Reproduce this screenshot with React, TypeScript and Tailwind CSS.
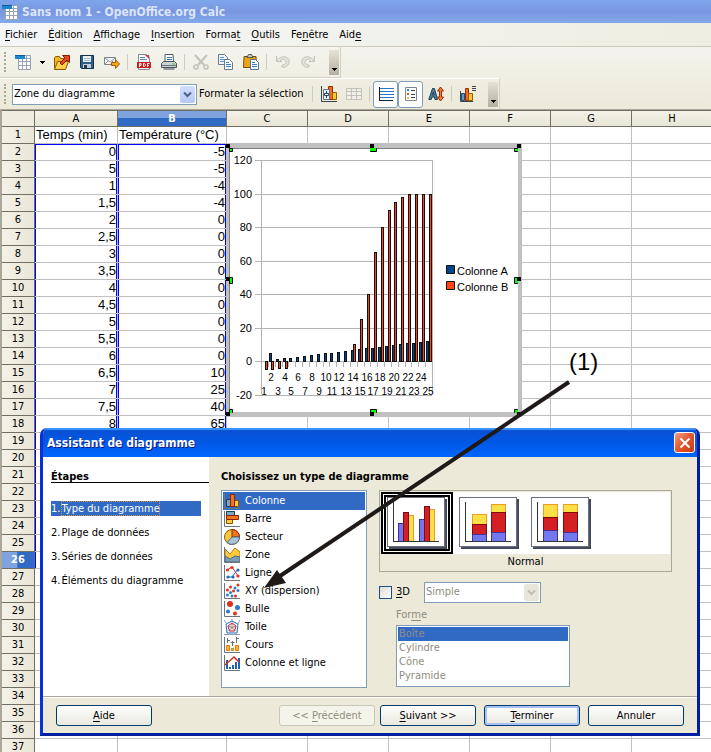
import { useState, type ReactNode } from "react";
import clsx from "clsx";

const COLUMNS = ["A", "B", "C", "D", "E", "F", "G", "H"];
const ROW_COUNT = 37;

const CELLS: Record<number, [string, string]> = {
  1: ["Temps (min)", "Température (°C)"],
  2: ["0", "-5"],
  3: ["5", "-5"],
  4: ["1", "-4"],
  5: ["1,5", "-4"],
  6: ["2", "0"],
  7: ["2,5", "0"],
  8: ["3", "0"],
  9: ["3,5", "0"],
  10: ["4", "0"],
  11: ["4,5", "0"],
  12: ["5", "0"],
  13: ["5,5", "0"],
  14: ["6", "0"],
  15: ["6,5", "10"],
  16: ["7", "25"],
  17: ["7,5", "40"],
  18: ["8", "65"],
};

const SERIES_A = [0, 5, 1, 1.5, 2, 2.5, 3, 3.5, 4, 4.5, 5, 5.5, 6, 6.5, 7, 7.5, 8, 8.5, 9, 9.5, 10, 10.5, 11, 11.5, 12];
const SERIES_B = [-5, -5, -4, -4, 0, 0, 0, 0, 0, 0, 0, 0, 0, 10, 25, 40, 65, 80, 90, 95, 98, 100, 100, 100, 100];

// [before, mnemonic letter, after]
const MENUS = [
  ["", "F", "ichier"],
  ["", "É", "dition"],
  ["", "A", "ffichage"],
  ["", "I", "nsertion"],
  ["Forma", "t", ""],
  ["", "O", "utils"],
  ["Fe", "n", "être"],
  ["Aid", "e", ""],
];

const STEPS = ["Type du diagramme", "Plage de données", "Séries de données", "Éléments du diagramme"];

function Icon({ children, size = 16 }: { children: ReactNode; size?: number }) {
  return (
    <svg width={size} height={size} viewBox="0 0 16 16" fill="none" className="shrink-0" aria-hidden="true">
      {children}
    </svg>
  );
}

/* ---------- toolbar icons ---------- */

function SheetIcon() {
  return (
    <Icon>
      <path d="M3 2h13v14H3z" fill="#fff" />
      <path d="M3.5 4v11.5h12V1.5H10M7.5 4v12M11.500 1v15M3 7.5h13M3 11.5h13M10 4.5h6" stroke="#9aa3b0" />
      <path d="M0 2h10v3H0z" fill="#1c86d0" />
      <path d="M0 1.5h10" stroke="#0c5c9c" />
    </Icon>
  );
}

function OpenIcon() {
  return (
    <Icon>
      <path d="M.5 14.500V3.500l1-1h4l1 2h6v3" fill="#f3b61c" stroke="#8d5a00" />
      <path d="M.5 15.500l3-8h11l-3 8z" fill="#fcd04a" stroke="#8d5a00" />
      <path d="M6 9l5-5-2.500-2.500h7v7L13 6 8 11z" fill="#e8471a" stroke="#8c1d00" />
    </Icon>
  );
}

function SaveIcon() {
  return (
    <Icon>
      <path d="M1.500 1.500h13v13h-12l-1-1z" fill="#2f5f86" stroke="#12324d" />
      <path d="M4 2h8v6H4z" fill="#e8f0f5" />
      <path d="M5 4.500h6M5 6.500h6" stroke="#a6bccb" />
      <path d="M4 10h8v4H4z" fill="#c5ccd2" />
      <path d="M5 11h3v3H5z" fill="#1c3c57" />
    </Icon>
  );
}

function MailIcon() {
  return (
    <Icon>
      <path d="M.5 3.500h11v7H.5z" fill="#f4f5f7" stroke="#7a828c" />
      <path d="M1 4l5 4 5-4M1 10l3-3M11 10L8 7" stroke="#8b939c" />
      <path d="M7.500 8.500h4v-3l4 4.500-4 4.500v-3h-4z" fill="#f7a71c" stroke="#a35a00" />
    </Icon>
  );
}

function PdfIcon() {
  return (
    <Icon>
      <path d="M2.500.5h8l3 3v12h-11z" fill="#fafbfc" stroke="#7e8a96" />
      <path d="M4 3.500h5M4 5.500h7" stroke="#5f86a8" />
      <path d="M9 1h4v4z" fill="#d8353a" />
      <path d="M1 8h14v6H1z" fill="#cf1b20" />
      <path d="M3.500 13V9.500h1.500v2H3.500M7.500 9.500v3h1l.8-1v-1l-.8-1zM11.500 13V9.500H13.500M11.500 11.500h1.500" stroke="#fff" />
    </Icon>
  );
}

function PrintIcon() {
  return (
    <Icon>
      <path d="M4 8V.5h8l.5 7.500" fill="#fff" stroke="#4d5a66" />
      <path d="M6 3.500h5M6 5.500h5" stroke="#3e7cb4" />
      <path d="M.5 9.500l2-2h11l2 2v4H.5z" fill="#cdd2d5" stroke="#47525b" />
      <path d="M1 11.500h14" stroke="#69747c" />
      <path d="M2.500 15h11" stroke="#39434b" />
      <path d="M11 10h3" stroke="#5bbf3a" />
    </Icon>
  );
}

function CutIcon() {
  return (
    <Icon>
      <path d="M2 1l9 10M14 1L5 11" stroke="#c2c1ba" strokeWidth="2" />
      <circle cx="3" cy="13" r="2" stroke="#c2c1ba" strokeWidth="1.500" />
      <circle cx="13" cy="13" r="2" stroke="#c2c1ba" strokeWidth="1.500" />
    </Icon>
  );
}

function CopyIcon() {
  return (
    <Icon>
      <path d="M.5.5h6l3 3v7h-9z" fill="#eef4f9" stroke="#6b7b89" />
      <path d="M2 3.500h4M2 5.500h6M2 7.500h6" stroke="#5d95c2" />
      <path d="M6.500 5.500h5l3 3v7h-8z" fill="#f7fafc" stroke="#6b7b89" />
      <path d="M8 8.500h3M8 10.500h5M8 12.500h5" stroke="#3d82bb" />
    </Icon>
  );
}

function PasteIcon() {
  return (
    <Icon>
      <path d="M1 2.500h12l.5 11h-13z" fill="#e9a41b" stroke="#7c4d00" />
      <path d="M4 3.500l1.500-3h3l1.500 3z" fill="#c3c8cc" stroke="#4f565c" />
      <path d="M7.500 5.500h5l3 3v7h-8z" fill="#f4f9fd" stroke="#5a7389" />
      <path d="M9 8.500h3M9 10.500h5M9 12.500h5" stroke="#3d82bb" />
    </Icon>
  );
}

function UndoIcon() {
  return (
    <Icon>
      <path d="M1.500 2v5.500H7M2 7l3-3c6-4 12 2 8 7-2 2-4 3-6 2v-2c4 0 5-3 3-5-2-1.500-3-1-5 1" stroke="#c4c3bb" fill="#e4e2d9" />
    </Icon>
  );
}

function RedoIcon() {
  return (
    <Icon>
      <path d="M14.500 2v5.500H9M14 7l-3-3C5 0-1 6 3 11c2 2 4 3 6 2v-2c-4 0-5-3-3-5 2-1.500 3-1 5 1" stroke="#c4c3bb" fill="#e4e2d9" />
    </Icon>
  );
}

function ChartAreaIcon() {
  return (
    <Icon>
      <path d="M.5 0v15.500H16" stroke="#38424c" />
      <path d="M7.500.5h4v13h-4z" fill="#f2691c" stroke="#9c2a00" />
      <path d="M11.500 6.500h4v7h-4z" fill="#ffc824" stroke="#9c5c00" />
      <path d="M2.500 3.500h6v10h-6z" fill="#e9f0f5" stroke="#5f7486" />
      <path d="M5.500 5v7" stroke="#27435a" />
      <path d="M3.500 7.500h4v2h-4z" fill="#fff" stroke="#27435a" />
    </Icon>
  );
}

function TableIcon() {
  return (
    <Icon>
      <path d="M.5 2.500h15v11H.5zM5.500 2v12M10.500 2v12M0 5.500h16M0 9.500h16" stroke="#c3c2b9" fill="#f1f0e8" />
    </Icon>
  );
}

function GridLinesIcon() {
  return (
    <Icon>
      <path d="M2 2.500h14M2 5.500h14M2 8.500h14M2 11.500h14" stroke="#2c74c9" />
      <path d="M1.500 1v14M1 14.500h14" stroke="#16202c" />
    </Icon>
  );
}

function LegendIcon() {
  return (
    <Icon>
      <path d="M2.500 1.500h11v13h-11z" fill="#fdfdfd" stroke="#7e8790" />
      <path d="M8 4.500h4M8 8.500h4M8 11.500h4" stroke="#3c4650" />
      <path d="M4 3h2v2H4z" fill="#3382c8" />
      <path d="M4 7h2v2H4z" fill="#e85a1a" />
      <path d="M4 11h2v2H4z" fill="#f5b81c" />
    </Icon>
  );
}

function ScaleTextIcon() {
  return (
    <Icon>
      <path d="M.8 13.500L4.500 2.500h2l3 11H7l-.6-2.500H4l-.8 2.500zM4.600 9h1.400l-.6-3z" fill="#4e7c9c" stroke="#1c3f59" />
      <path d="M12.500 1l3 4h-2v6h2l-3 4-3-4h2V5h-2z" fill="#f3793a" stroke="#a32c00" />
    </Icon>
  );
}

function AutoLayoutIcon() {
  return (
    <Icon>
      <path d="M.5 5v10.500H13" stroke="#38424c" />
      <path d="M1.500 7.500h3v7h-3z" fill="#5f9cc9" stroke="#1f4d70" />
      <path d="M5.500 2.500h3v12h-3z" fill="#f2691c" stroke="#9c2a00" />
      <path d="M8.500 7.500h4v7h-4z" fill="#ffc824" stroke="#9c5c00" />
      <path d="M12 .5h4M12 2.500h4M12 4.500h4" stroke="#444" />
    </Icon>
  );
}

/* ---------- chart type icons ---------- */

const AXES = <path d="M.5 0v15.500H16" stroke="#6d747c" />;

const CHART_TYPES: { label: string; icon: ReactNode }[] = [
  {
    label: "Colonne",
    icon: (
      <>
        {AXES}
        <path d="M2.500 6.500h4v7h-4z" fill="#7aa6c4" stroke="#1d3f5c" />
        <path d="M10.500 7.500h4v6h-4z" fill="#ffcd34" stroke="#8f5200" />
        <path d="M6.500 1.500h4v12h-4z" fill="#f27422" stroke="#8c2400" />
      </>
    ),
  },
  {
    label: "Barre",
    icon: (
      <>
        {AXES}
        <path d="M2.500.5h8v4h-8z" fill="#7aa6c4" stroke="#1d3f5c" />
        <path d="M2.500 8.500h6v4h-6z" fill="#ffcd34" stroke="#8f5200" />
        <path d="M2.500 4.500h12v4h-12z" fill="#f27422" stroke="#8c2400" />
      </>
    ),
  },
  {
    label: "Secteur",
    icon: (
      <>
        <circle cx="8" cy="8" r="7.500" fill="#f9c63c" stroke="#8f5a10" />
        <path d="M8 8V.5A7.500 7.500 0 0 1 15.500 8z" fill="#f27422" stroke="#8c2400" />
        <path d="M8 8h7.500A7.500 7.500 0 0 1 3 13.500z" fill="#a9c3d6" stroke="#4d6d86" />
      </>
    ),
  },
  {
    label: "Zone",
    icon: (
      <>
        <path d="M1 2l5 5 5-6 5 4v10H1z" fill="#ffcb3a" stroke="#b07b10" />
        <path d="M1 9l5 3 5-3 5 1v5H1z" fill="#7c9fb8" stroke="#446882" />
        {AXES}
      </>
    ),
  },
  {
    label: "Ligne",
    icon: (
      <>
        {AXES}
        <path d="M3 5l5-3 6 9" stroke="#d92c1c" />
        <path d="M3 12h5l6-8" stroke="#2b74c4" />
        <g fill="#e0301e">
          <circle cx="3.500" cy="5" r="1.600" />
          <circle cx="8" cy="2.500" r="1.600" />
          <circle cx="14" cy="11" r="1.600" />
        </g>
        <g fill="#2268be">
          <circle cx="4" cy="12" r="1.600" />
          <circle cx="9" cy="12" r="1.600" />
          <circle cx="14" cy="5" r="1.600" />
        </g>
      </>
    ),
  },
  {
    label: "XY (dispersion)",
    icon: (
      <>
        {AXES}
        <g fill="#e0301e">
          <circle cx="6.500" cy="4" r="1.500" />
          <circle cx="14" cy="2" r="1.500" />
          <circle cx="3.500" cy="7" r="1.500" />
          <circle cx="9.500" cy="8" r="1.500" />
          <circle cx="11.500" cy="13" r="1.500" />
        </g>
        <g fill="#2f7bd0">
          <circle cx="3.500" cy="12" r="1.500" />
          <circle cx="6.500" cy="9.500" r="1.500" />
          <circle cx="8" cy="13" r="1.500" />
          <circle cx="11" cy="5" r="1.500" />
          <circle cx="14" cy="7.500" r="1.500" />
        </g>
      </>
    ),
  },
  {
    label: "Bulle",
    icon: (
      <>
        {AXES}
        <circle cx="6" cy="3" r="3" fill="#e0301e" />
        <circle cx="13.500" cy="6.500" r="2.500" fill="#2f7bd0" />
        <circle cx="4" cy="10.500" r="2" fill="#2f7bd0" />
        <circle cx="11" cy="12.500" r="2" fill="#e0301e" />
      </>
    ),
  },
  {
    label: "Toile",
    icon: (
      <>
        <path d="M8 2l6 3-1 9H3L2 5z" fill="#e5f0fa" stroke="#2f6fb5" />
        <path d="M0 1l3 4M8 0v2M16 1l-2 4M0 15.500h16" stroke="#8aa2b8" />
        <path d="M8 4l4 3-1.500 5h-5L4 7z" fill="#f7d8da" stroke="#c92a32" />
        <path d="M8 5v3.500l-3 3M8 8.500l3 3M4 7l4 1.500L12 7" stroke="#777" strokeWidth=".7" />
      </>
    ),
  },
  {
    label: "Cours",
    icon: (
      <>
        {AXES}
        <path d="M3.500 1v5M3.500 3.500H6M8.500 4v5M6.500 5.500h4M12.500 0v6M12.500 1.500H15" stroke="#6a6f75" />
        <path d="M2.500 8.500h3v5h-3z" fill="#ffb52c" stroke="#e07c10" />
        <path d="M7.500 11.500h2v2h-2z" fill="#ffb52c" stroke="#e07c10" />
        <path d="M11.500 8.500h3v5h-3z" fill="#ffb52c" stroke="#e07c10" />
      </>
    ),
  },
  {
    label: "Colonne et ligne",
    icon: (
      <>
        {AXES}
        <path d="M2 5h2v9H2zM5 12h2v2H5zM8 10h2v4H8zM11 7h2v7h-2zM14 3h2v11h-2z" fill="#1f62ad" />
        <path d="M1 10l9-8 5 5" stroke="#d92c1c" strokeWidth="1.500" />
      </>
    ),
  },
];

/* ---------- sub type previews ---------- */

type Block = [x: number, y: number, w: number, h: number, color: "blue" | "red" | "yellow"];

const BLOCK_COLORS = {
  blue: { fill: "#7178f0", stroke: "#4a2c96" },
  red: { fill: "#d42024", stroke: "#7c0c10" },
  yellow: { fill: "#fde047", stroke: "#f29b22" },
};

const SUB_TYPES: { name: string; blocks: Block[] }[] = [
  {
    name: "Normal",
    blocks: [
      [11, 26, 5, 18, "blue"],
      [21, 18, 5, 26, "yellow"],
      [16, 15, 5, 29, "red"],
      [32, 22, 5, 22, "blue"],
      [42, 12, 5, 32, "yellow"],
      [37, 9, 5, 35, "red"],
    ],
  },
  {
    name: "Empilé",
    blocks: [
      [13, 17, 14, 10, "yellow"],
      [13, 27, 14, 10, "red"],
      [13, 37, 14, 7, "blue"],
      [32, 7, 14, 8, "yellow"],
      [32, 15, 14, 20, "red"],
      [32, 35, 14, 9, "blue"],
    ],
  },
  {
    name: "Pourcentage",
    blocks: [
      [12, 7, 14, 13, "yellow"],
      [12, 20, 14, 13, "red"],
      [12, 33, 14, 11, "blue"],
      [32, 7, 14, 8, "yellow"],
      [32, 15, 14, 20, "red"],
      [32, 35, 14, 9, "blue"],
    ],
  },
];

function Preview({ blocks }: { blocks: Block[] }) {
  return (
    <svg width="60" height="52" viewBox="0 0 60 52" fill="none" shapeRendering="crispEdges" aria-hidden="true">
      <path d="M2 2h58v50H2z" fill="#454a5c" />
      <path d="M.5.5h57v49H.5z" fill="#fff" stroke="#6b7080" />
      {blocks.map(([x, y, w, h, color], i) => (
        <rect key={i} x={x + 0.5} y={y + 0.5} width={w} height={h} {...BLOCK_COLORS[color]} />
      ))}
      <path d="M6.500 5v39.500H52" stroke="#2e3340" />
    </svg>
  );
}

/* ---------- embedded chart ---------- */

const PLOT = { left: 35, right: 206, top: 17, zero: 218, bottom: 251 };
const UNIT = (PLOT.zero - PLOT.top) / 120;
const STEP = (PLOT.right - PLOT.left) / SERIES_A.length;

function Bar({ x, value, fill }: { x: number; value: number; fill: string }) {
  if (value === 0) return null;
  const edge = Math.round(PLOT.zero - value * UNIT);
  return (
    <rect
      x={Math.round(x) + 0.5}
      y={Math.min(edge, PLOT.zero) + 0.5}
      width="2"
      height={Math.abs(edge - PLOT.zero)}
      fill={fill}
      stroke="#111"
    />
  );
}

function SheetChart() {
  return (
    <svg width="296" height="274" viewBox="0 0 296 274" fill="none" className="block font-['Liberation_Sans',sans-serif] text-[11px]" role="img">
      <path d="M0 1h296v273H0z" fill="#c0c0c0" />
      <path d="M3 5h289v264H3z" fill="#808080" />
      <path d="M4 6h288v263H4z" fill="#fff" />

      {[120, 100, 80, 60, 40, 20, 0, -20].map((v) => {
        const y = Math.round(PLOT.zero - v * UNIT);
        return (
          <g key={v}>
            <path d={`M29 ${y + 0.5}H206`} stroke="#b3b3b3" />
            <text x="26" y={y + 4} textAnchor="end" fill="#000">{v}</text>
          </g>
        );
      })}
      <path d="M35.500 17v234M206.500 17v234" stroke="#b3b3b3" />

      {SERIES_A.map((a, i) => {
        const x = PLOT.left + i * STEP;
        return (
          <g key={i}>
            <path d={`M${Math.round(x) + 0.5} 218v6`} stroke="#b3b3b3" />
            <Bar x={x + 1} value={a} fill="#004586" />
            <Bar x={x + 3.5} value={SERIES_B[i]} fill="#ff420e" />
            <text x={Math.round(x) + 3} y={i % 2 ? 238 : 252} textAnchor="middle" fill="#000" className="text-[10px]">{i + 1}</text>
          </g>
        );
      })}

      <path d="M220.500 122.500h8v8h-8z" fill="#004586" stroke="#111" />
      <text x="231" y="132" fill="#000">Colonne A</text>
      <path d="M220.500 138.500h8v8h-8z" fill="#ff420e" stroke="#111" />
      <text x="231" y="148" fill="#000">Colonne B</text>

      {/* selection handles: green for the chart area, black for the frame */}
      <g fill="#00ff00" stroke="#000">
        <path d="M3.500 5.500h3v3h-3zM144.500 5.500h6v3h-6zM288.500 5.500h3v3h-3z" />
        <path d="M3.500 134.500h3v6h-3zM288.500 134.500h3v6h-3z" />
        <path d="M3.500 266.500h3v3h-3zM144.500 266.500h6v3h-6zM288.500 266.500h3v3h-3z" />
      </g>
      <path d="M4 6h2v2H4zM144 5h6v3h-6zM289 6h3v2h-3zM4 135h2v5H4zM289 135h3v5h-3zM4 267h2v3H4zM145 267h5v3h-5zM289 267h3v3h-3z" fill="#00ff00" />
      <path
        d="M0 1h4v4H0zM144 1h4v4h-4zM291 1h4v4h-4zM0 134h4v4H0zM291 134h4v4h-4zM0 269h4v4H0zM144 269h4v4h-4zM291 269h4v4h-4z"
        fill="#000"
      />
    </svg>
  );
}

/* ---------- toolbar parts ---------- */

function ToolButton({ label, children }: { label: string; children: ReactNode }) {
  return (
    <button aria-label={label} className="flex size-[25px] shrink-0 items-center justify-center">
      {children}
    </button>
  );
}

function Separator() {
  return <span className="mx-[3px] h-4 w-px shrink-0 bg-[#cfcbbd]" />;
}

function Grip() {
  return <span className="ml-1 h-5 w-0 shrink-0 border-l-2 border-dotted border-[#aaa899]" />;
}

function Overflow({ label }: { label: string }) {
  return (
    <button aria-label={label} className="flex h-[25px] w-[10px] shrink-0 items-end justify-center bg-linear-to-b from-[#e6e3d6] to-[#b3b09f] pb-1">
      <Caret />
    </button>
  );
}

function Caret() {
  return (
    <svg width="5" height="3" viewBox="0 0 5 3" shapeRendering="crispEdges" aria-hidden="true">
      <path d="M0 0h5v1H4v1H3v1H2V2H1V1H0z" fill="#000" />
    </svg>
  );
}

function Chevron({ disabled }: { disabled?: boolean }) {
  return (
    <span
      className={clsx(
        "pointer-events-none absolute inset-y-[2px] right-[2px] flex w-[15px] items-center justify-center rounded-[2px]",
        disabled ? "bg-[#e8e6dc]" : "bg-linear-to-b from-[#d3defd] to-[#b4c8f6]"
      )}
    >
      <svg width="9" height="7" viewBox="0 0 9 7" fill="none" aria-hidden="true">
        <path d="M1 1.500l3.500 3.500L8 1.500" stroke={disabled ? "#c0beb2" : "#4d6185"} strokeWidth="2" />
      </svg>
    </span>
  );
}

function Mnemonic({ parts }: { parts: string[] }) {
  return (
    <>
      {parts[0]}
      <u className="underline-offset-2">{parts[1]}</u>
      {parts[2]}
    </>
  );
}

function DialogButton({ parts, disabled, primary }: { parts: string[]; disabled?: boolean; primary?: boolean }) {
  return (
    <button
      disabled={disabled}
      className={clsx(
        "h-[21px] w-24 rounded-[3px] border leading-none",
        disabled
          ? "border-[#c9c7ba] bg-[#f5f4ea] text-[#8f8d80]"
          : "border-[#003c74] bg-linear-to-b from-white to-[#e9e8e0]",
        primary && "shadow-[inset_0_0_0_2px_#a9c1f3]"
      )}
    >
      <Mnemonic parts={parts} />
    </button>
  );
}

/* ---------- spreadsheet ---------- */

function Sheet() {
  return (
    <table className="w-[711px] table-fixed border-separate border-spacing-0 bg-white">
      <colgroup>
        <col className="w-[33px]" />
        <col className="w-[83px]" />
        <col className="w-[109px]" />
        {COLUMNS.slice(2).map((c) => (
          <col key={c} className="w-[81px]" />
        ))}
      </colgroup>
      <thead>
        <tr className="h-[17px]">
          <th className="border-y border-r border-[#716f64] bg-[#efedde] p-0" />
          {COLUMNS.map((c) => (
            <th
              key={c}
              scope="col"
              className={clsx(
                "border-y border-r border-[#716f64] p-0 leading-[15px]",
                c === "B"
                  ? "bg-linear-to-b from-[#7fa3de] from-45% to-[#316ac5] to-50% font-bold text-white"
                  : "bg-linear-to-b from-[#f4f2e8] to-[#e9e6d6] font-normal"
              )}
            >
              {c}
            </th>
          ))}
        </tr>
      </thead>
      <tbody>
        {Array.from({ length: ROW_COUNT }, (_, i) => i + 1).map((row) => (
          <tr key={row} className="h-[17px]">
            <th
              scope="row"
              className={clsx(
                "border-r border-b border-[#716f64] p-0 leading-4",
                row === 26
                  ? "bg-linear-to-r from-[#7fa3de] from-45% to-[#316ac5] to-50% font-bold text-white"
                  : "bg-linear-to-r from-[#f4f2e8] to-[#e9e6d6] font-normal"
              )}
            >
              {row}
            </th>
            {COLUMNS.map((c, col) => (
              <td
                key={c}
                className={clsx(
                  "overflow-hidden border-r border-b border-[#c0c0c0] px-px py-0 font-['Liberation_Sans',sans-serif] text-[13px] leading-4 whitespace-nowrap",
                  row > 1 && "text-right",
                  row > 2 && row <= 26 && col < 2 && "shadow-[inset_1px_0_0_#0000ff,inset_-1px_0_0_#0000ff]",
                  row === 2 && col < 2 && "shadow-[inset_1px_1px_0_#0000ff,inset_-1px_0_0_#0000ff]"
                )}
              >
                {CELLS[row]?.[col]}
              </td>
            ))}
          </tr>
        ))}
      </tbody>
    </table>
  );
}

/* ---------- chart wizard ---------- */

function ChartWizard() {
  const [step, setStep] = useState(0);
  const [chartType, setChartType] = useState("Colonne");
  const [subType, setSubType] = useState("Normal");

  return (
    <section
      aria-label="Assistant de diagramme"
      className="w-[660px] overflow-hidden rounded-t-[7px] border-x-[3px] border-b-[3px] border-[#0831d9] border-r-[#001ea0] border-b-[#001ea0] bg-[#ece9d8]"
    >
      <header className="-mx-[3px] flex h-[29px] items-center justify-between bg-linear-to-b from-[#0a4fd0] via-[#0058e6] to-[#0066ff] pr-[5px] pl-[7px] shadow-[inset_0_2px_1px_#3c94ff]">
        <h1 className="text-[12px] font-bold text-white [text-shadow:1px_1px_#0a1883]">Assistant de diagramme</h1>
        <button
          aria-label="Fermer"
          className="flex size-[21px] items-center justify-center rounded-[3px] border border-white bg-linear-to-br from-[#f09a80] via-[#e2562f] to-[#c33a10]"
        >
          <svg width="12" height="12" viewBox="0 0 12 12" aria-hidden="true">
            <path d="M1.500 1.500l9 9M10.500 1.500l-9 9" stroke="#fff" strokeWidth="2" />
          </svg>
        </button>
      </header>

      <div className="flex h-[239px]">
        <nav className="w-[166px] shrink-0 bg-white pt-3 pl-2">
          <h2 className="h-[14px] border-b border-black leading-4 font-bold">Étapes</h2>
          <ol className="mt-[18px] flex w-[150px] flex-col gap-[9px]">
            {STEPS.map((label, i) => (
              <li key={label}>
                <button
                  onClick={() => setStep(i)}
                  className={clsx("flex h-[15px] w-full items-center gap-px leading-[15px]", step === i && "bg-[#316ac5] text-white")}
                >
                  <span>{i + 1}.</span>
                  <span className={clsx(step === i && "outline outline-dotted -outline-offset-1 outline-[#e0953a]")}>
                    {label}
                  </span>
                </button>
              </li>
            ))}
          </ol>
        </nav>

        <div className="flex-1 pt-3 pr-[25px] pl-3">
          <h2 className="h-[14px] leading-4 font-bold">Choisissez un type de diagramme</h2>
          <div className="mt-[7px] flex gap-3">
            <ul className="h-[198px] w-[146px] shrink-0 border border-[#7f9db9] bg-white p-px">
              {CHART_TYPES.map(({ label, icon }) => (
                <li key={label}>
                  <button
                    onClick={() => setChartType(label)}
                    className={clsx(
                      "flex h-[18px] w-full items-center gap-[5px] pl-px",
                      chartType === label && "bg-[#316ac5] text-white"
                    )}
                  >
                    <Icon>{icon}</Icon>
                    {label}
                  </button>
                </li>
              ))}
            </ul>

            <div className="flex-1">
              <div className="border border-[#aca899] p-px">
                <div className="flex bg-white">
                  {SUB_TYPES.map(({ name, blocks }) => (
                    <button
                      key={name}
                      aria-label={name}
                      onClick={() => setSubType(name)}
                      className={clsx(
                        "flex h-[62px] w-[72px] items-center justify-center",
                        subType === name && "border-2 border-black outline-2 -outline-offset-5 outline-black"
                      )}
                    >
                      <Preview blocks={blocks} />
                    </button>
                  ))}
                </div>
                <p className="h-4 text-center leading-4">{subType}</p>
              </div>

              <div className="mt-[10px] flex items-center">
                <input
                  id="three-d"
                  type="checkbox"
                  className="size-[13px] appearance-none border border-[#1c5180] bg-linear-to-br from-[#dcdcd7] to-white checked:bg-[#316ac5]"
                />
                <label htmlFor="three-d" className="w-8 pl-1">
                  <u className="underline-offset-2">3</u>D
                </label>
                <div className="relative">
                  <select
                    aria-label="Modèle 3D"
                    disabled
                    className="block h-[21px] w-[117px] appearance-none border border-[#7f9db9] bg-white px-px text-[#8f8d80] opacity-100"
                  >
                    <option>Simple</option>
                  </select>
                  <Chevron disabled />
                </div>
              </div>

              <div className="mt-1 ml-[17px] text-[#8f8d80]">
                <p id="shape-label" className="h-[18px] leading-4">
                  For<u className="underline-offset-2">m</u>e
                </p>
                <ul
                  role="listbox"
                  aria-labelledby="shape-label"
                  aria-disabled="true"
                  className="h-[62px] w-[174px] border border-[#7f9db9] bg-white p-px"
                >
                  {["Boîte", "Cylindre", "Cône", "Pyramide"].map((shape, i) => (
                    <li
                      key={shape}
                      role="option"
                      aria-selected={i === 0}
                      className={clsx("h-[14px] pl-px leading-[14px]", i === 0 && "bg-[#316ac5]")}
                    >
                      {shape}
                    </li>
                  ))}
                </ul>
              </div>
            </div>
          </div>
        </div>
      </div>

      <footer className="flex h-[37px] items-center gap-2 border-t border-[#aca899] px-[13px] shadow-[inset_0_1px_0_#fff]">
        <DialogButton parts={["", "A", "ide"]} />
        <div className="ml-auto flex gap-[5px]">
          <DialogButton parts={["<< ", "P", "récédent"]} disabled />
          <DialogButton parts={["", "S", "uivant >>"]} />
        </div>
        <DialogButton parts={["", "T", "erminer"]} primary />
        <DialogButton parts={["Annuler", "", ""]} />
      </footer>
    </section>
  );
}

export default function App() {
  return (
    <div className="h-screen overflow-hidden bg-[#efeee3] font-['DejaVu_Sans_Condensed','DejaVu_Sans',sans-serif] text-[11px] text-black">
      <header className="flex h-[23px] items-center gap-1 bg-linear-to-b from-[#7ea6ea] via-[#7a96e0] to-[#82aaea] pl-[2px]">
        <SheetIcon />
        <h1 className="text-[12px] font-bold text-[#dbe6fb]">Sans nom 1 - OpenOffice.org Calc</h1>
      </header>

      <nav className="flex h-6 items-center gap-[11px] border-b border-[#cfcabb] bg-linear-to-r from-[#f5f6f8] to-[#efeee2] pt-[2px] pl-[5px]">
        {MENUS.map((parts) => (
          <button key={parts.join("")}>
            <Mnemonic parts={parts} />
          </button>
        ))}
      </nav>

      <div className="bg-linear-to-b from-[#f4f4ee] to-[#ece9d8]">
        <div className="flex h-[31px] w-[341px] items-center border-r border-b border-[#d5d1c1]">
          <Grip />
          <button aria-label="Nouveau" className="ml-[9px] flex h-[25px] w-[34px] shrink-0 items-center justify-between pr-1">
            <SheetIcon />
            <Caret />
          </button>
          <ToolButton label="Ouvrir"><OpenIcon /></ToolButton>
          <ToolButton label="Enregistrer"><SaveIcon /></ToolButton>
          <ToolButton label="Envoyer par e-mail"><MailIcon /></ToolButton>
          <Separator />
          <ToolButton label="Exporter au format PDF"><PdfIcon /></ToolButton>
          <ToolButton label="Imprimer"><PrintIcon /></ToolButton>
          <Separator />
          <ToolButton label="Couper"><CutIcon /></ToolButton>
          <ToolButton label="Copier"><CopyIcon /></ToolButton>
          <ToolButton label="Coller"><PasteIcon /></ToolButton>
          <Separator />
          <ToolButton label="Annuler la saisie"><UndoIcon /></ToolButton>
          <ToolButton label="Restaurer"><RedoIcon /></ToolButton>
          <span className="flex-1" />
          <Overflow label="Options de la barre standard" />
          <span className="w-px" />
        </div>

        <div className="flex h-[31px] w-[500px] items-center border-t border-r border-t-white border-r-[#d5d1c1]">
          <Grip />
          <div className="relative ml-[6px] shrink-0">
            <select
              aria-label="Élément du diagramme"
              className="block h-[21px] w-[185px] appearance-none border border-[#7f9db9] bg-white px-px"
            >
              <option>Zone du diagramme</option>
            </select>
            <Chevron />
          </div>
          <button className="ml-[2px] w-[110px] shrink-0 text-left whitespace-nowrap">Formater la sélection</button>
          <Separator />
          <ToolButton label="Zone du diagramme"><ChartAreaIcon /></ToolButton>
          <ToolButton label="Table de données"><TableIcon /></ToolButton>
          <Separator />
          <button aria-label="Grille horizontale" className="flex h-[27px] w-[25px] shrink-0 items-center justify-center rounded-[3px] border border-[#7f9db9] bg-white">
            <GridLinesIcon />
          </button>
          <button aria-label="Légende" className="flex h-[27px] w-[25px] shrink-0 items-center justify-center rounded-[3px] border border-[#7f9db9] bg-white">
            <LegendIcon />
          </button>
          <ToolButton label="Adapter le texte"><ScaleTextIcon /></ToolButton>
          <Separator />
          <ToolButton label="Mise en page automatique"><AutoLayoutIcon /></ToolButton>
          <span className="flex-1" />
          <Overflow label="Options de la barre de mise en forme" />
          <span className="w-px" />
        </div>
      </div>

      <main className="relative border-t border-l-2 border-[#aaa799]">
        <Sheet />
        <div className="absolute top-[33px] left-[224px]">
          <SheetChart />
        </div>
        <div className="absolute top-[318px] left-[38px]">
          <ChartWizard />
        </div>

        {/* callout (1) pointing at the XY entry */}
        <p className="absolute top-[238px] left-[567px] font-['Liberation_Sans',sans-serif] text-[24px] leading-7">(1)</p>
        <svg width="310" height="210" viewBox="0 0 310 210" className="pointer-events-none absolute top-[270px] left-[260px]" aria-hidden="true">
          <path d="M307 2L18 196" stroke="#1f1a17" strokeWidth="4" />
          <path d="M2 208L15 190L24 203z" fill="#1f1a17" />
        </svg>
      </main>
    </div>
  );
}
